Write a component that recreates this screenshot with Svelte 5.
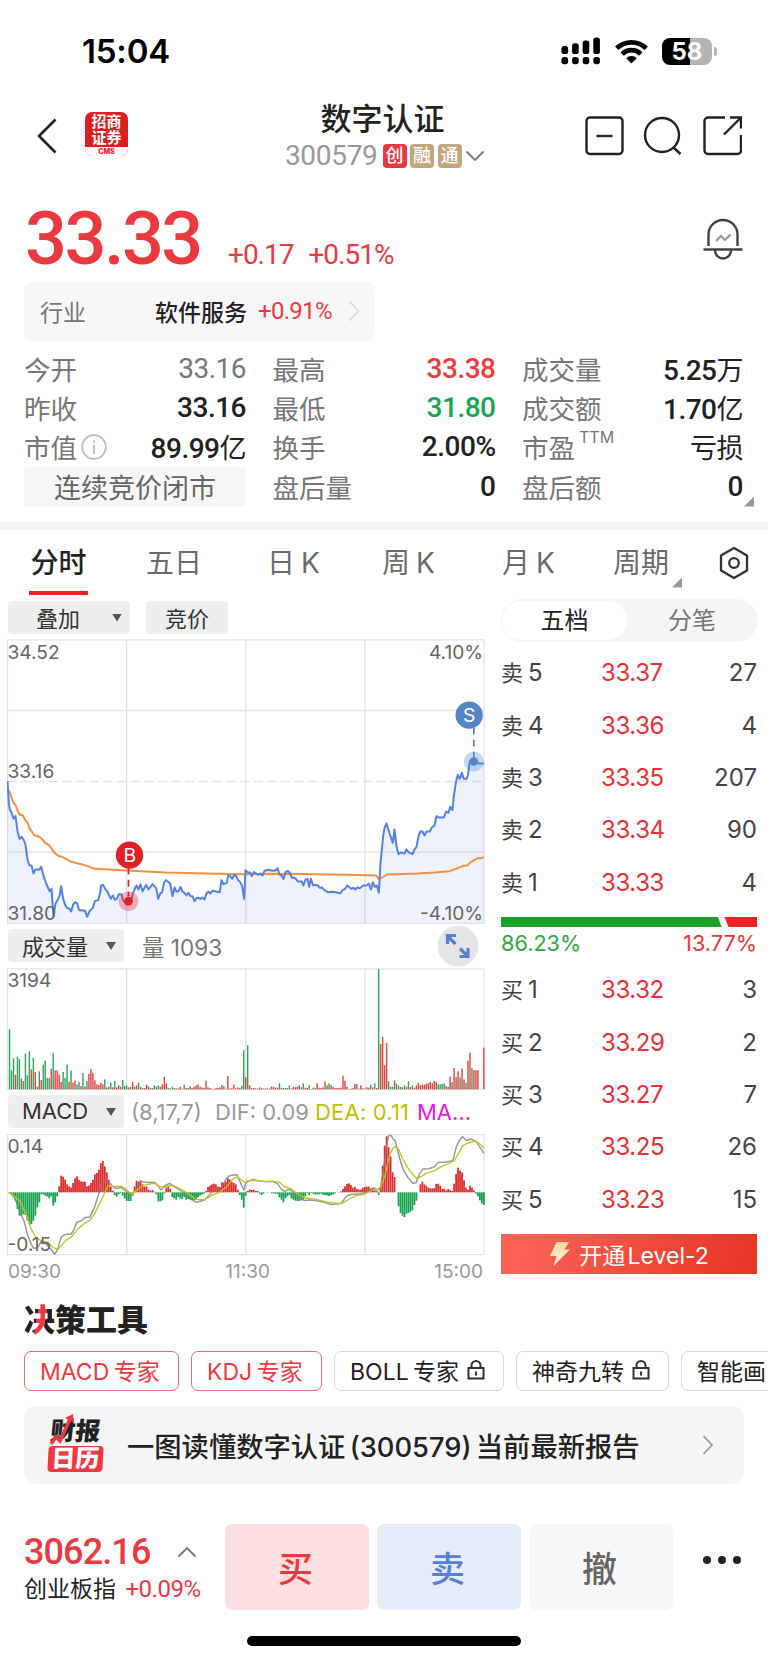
<script lang="ts">
    type Stat = { label: string; value: string; unit?: string; tone?: string; info?: boolean; sup?: string };

    const stats: Stat[] = [
        { label: '今开', value: '33.16', tone: 'muted' },
        { label: '最高', value: '33.38', tone: 'up' },
        { label: '成交量', value: '5.25', unit: '万' },
        { label: '昨收', value: '33.16' },
        { label: '最低', value: '31.80', tone: 'down' },
        { label: '成交额', value: '1.70', unit: '亿' },
        { label: '市值', value: '89.99', unit: '亿', info: true },
        { label: '换手', value: '2.00%' },
        { label: '市盈', value: '', unit: '亏损', sup: 'TTM' },
        { label: '连续竞价闭市', value: '' },
        { label: '盘后量', value: '0' },
        { label: '盘后额', value: '0' }
    ];

    const sells = [
        ['卖', '5', '33.37', '27'],
        ['卖', '4', '33.36', '4'],
        ['卖', '3', '33.35', '207'],
        ['卖', '2', '33.34', '90'],
        ['卖', '1', '33.33', '4']
    ];
    const buys = [
        ['买', '1', '33.32', '3'],
        ['买', '2', '33.29', '2'],
        ['买', '3', '33.27', '7'],
        ['买', '4', '33.25', '26'],
        ['买', '5', '33.23', '15']
    ];

    const tools = [
        { name: 'MACD 专家', active: true, width: 155 },
        { name: 'KDJ 专家', active: true, width: 131 },
        { name: 'BOLL 专家', lock: true, width: 170 },
        { name: '神奇九转', lock: true, width: 153 },
        { name: '智能画', width: 140 }
    ];

    // chart units are thirds of a pixel
    const price =
        '24,455 28,520 31,540 36,548 42,568 48,560 54,605 60,628 66,622 72,630 78,645 84,690 90,708 96,708 102,732 108,720 120,720 125,712 131,735 140,762 150,785 156,778 162,860 168,822 174,812 180,800 185,770 191,808 197,826 203,836 209,836 215,846 221,825 227,818 233,822 239,842 245,842 257,844 263,862 270,845 280,835 286,815 296,812 302,790 305,768 311,766 317,778 323,785 334,808 340,798 346,811 352,808 358,794 366,794 371,812 380,824 393,824 399,795 405,780 411,768 417,780 423,764 429,786 440,766 447,780 459,764 470,776 476,808 482,792 488,788 494,758 500,752 512,762 519,800 525,774 531,786 537,785 543,772 549,786 555,790 561,798 567,790 573,800 579,800 585,815 591,806 597,805 603,808 609,804 615,810 621,792 627,786 633,792 639,784 661,788 666,752 672,764 682,760 686,737 692,740 698,748 704,736 710,740 716,752 722,758 728,770 734,808 738,722 745,730 751,728 757,740 763,728 769,732 777,736 783,732 789,738 795,724 807,721 819,724 829,722 834,716 840,735 846,738 852,748 858,728 865,724 871,730 877,745 883,744 889,748 895,756 907,756 912,768 918,750 924,748 929,772 934,748 941,768 947,766 955,768 961,775 967,774 975,782 985,788 1000,787 1023,791 1029,782 1037,778 1043,768 1055,778 1061,774 1067,780 1073,774 1081,776 1091,768 1101,768 1108,762 1114,780 1120,758 1126,772 1132,768 1138,790 1143,700 1147,660 1151,620 1155,596 1161,582 1167,602 1173,620 1180,640 1185,600 1191,650 1197,674 1203,669 1215,672 1221,660 1227,668 1239,674 1245,660 1251,652 1257,620 1263,605 1269,606 1275,618 1281,606 1291,606 1297,594 1305,588 1311,560 1317,564 1333,564 1340,546 1347,550 1352,532 1359,542 1363,500 1369,460 1375,436 1381,448 1387,430 1393,448 1401,448 1405,438 1411,395 1417,390 1425,396 1440,402 1453,402';
    const average =
        '24,480 30,487 36,505 42,520 48,527 54,542 60,555 70,558 76,570 84,580 90,596 104,617 115,620 125,626 137,640 150,648 165,670 178,680 187,681 215,697 245,704 265,710 285,718 380,723 500,729 620,732 735,734 865,733 1035,736 1130,738 1137,748 1150,743 1163,735 1255,732 1305,729 1350,725 1375,716 1390,709 1403,708 1415,697 1435,686 1447,686 1453,683';

    // one bar per minute, negative = falling minute
    const volume = [
        -180, -57, -93, 44, -98, -90, 32, -25, -107, -42, -114, 60, -94, 52, 8, -54, 28, -74, -86, -34, -34, 62, -109, 57, 57, 44, 22, -52, -34, -74,
        23, -57, 20, 26, -14, -22, 10, -49, 8, -25, 46, 61, 50, 27, 15, 13, 20, 15, -30, 6, -8, -20, 6, -25, 6, 12, 8, -28, -10, -12,
        6, -8, 22, 8, 12, -20, -8, 4, 4, 14, -10, 4, 4, -12, -8, -12, 8, 15, 37, 18, -4, -3, -8, 4, 3, 3, 8, 2, -14, 4,
        4, -10, 4, 8, 12, 15, -8, 6, 4, 26, 6, 4, -2, 1, 4, 4, 6, 13, -10, 2, 40, 3, 3, 14, 3, 6, 4, -10, -117, 36,
        -132, 12, 3, 4, 3, 2, -6, 4, 2, 3, 3, 2, 8, 7, 5, 5, -18, -5, -4, 4, -4, -12, 2, 7, 6, 7, 13, -6, -18, 5,
        4, -12, 1, -5, 4, 18, 5, 4, 6, 24, -12, -18, 12, 7, 4, 4, 4, 5, 41, 26, 8, 1, -2, 4, 16, -16, 2, 12, 3, 2,
        6, 5, -14, 6, -18, 4, -361, 136, 157, 72, 139, -24, -8, -8, 26, -17, -12, 7, -6, -12, 8, -24, 7, -12, 5, 12, 19, 12, 14, 14,
        17, 18, 22, 18, 25, 22, -15, -15, -16, -18, 10, 7, 38, -22, 64, 36, 54, -36, 63, 30, -20, 86, 110, -64, 58, 57, 57, 0, 0, 125
    ];

    const macd = [
        -2, -5, -15, -25, -50, -70, -70, -66, -68, -85, -97, -95, -85, -70, -45, -30, -6, -6, -10, -12, -18, -12, -40, -30, -12, 18, 50, 47, 38, 24,
        18, 14, 28, 42, 48, 37, 33, 31, 32, 18, 20, 28, 38, 54, 58, 68, 88, 94, 78, 60, 38, 16, 5, -8, -13, -6, -2, -9, -18, -26,
        -26, -26, -10, 18, 35, 32, 36, 24, 17, 18, 8, 5, 7, 2, -6, -27, -27, -24, -3, 14, 18, 10, -14, -18, -22, -14, -18, -20, -14, -22,
        -20, -22, -24, -24, -22, -15, -10, -6, -4, 4, 16, 20, 24, 26, 24, 17, 16, 30, 28, 32, 42, 38, 32, 28, 24, 8, -8, -22, -46, -10,
        4, 8, 7, 8, 4, 4, -4, -8, -4, 0, 1, 0, -3, -3, -4, -5, -15, -22, -30, -18, -12, -8, -18, -22, -25, -26, -26, -24, -22, -12,
        -2, -8, -2, -4, -7, -6, -6, -4, -7, -8, -9, -11, -8, -6, -3, 0, 1, 3, 10, 18, 25, 27, 22, 14, 16, 10, 8, 8, 14, 16,
        17, 17, 11, 14, 8, 4, -8, 20, 80, 140, 168, 135, 108, 60, 46, 0, -42, -62, -70, -74, -64, -62, -58, -54, -38, -25, 0, 24, 32, 24,
        20, 14, 12, 12, 12, 25, 26, 20, 10, 10, 6, 10, 6, 4, 26, 55, 74, 65, 60, 36, 14, 8, 20, 14, 6, -4, -12, -24, -34, -38
    ];

    const dif =
        '30,815 45,830 60,870 75,905 85,945 95,970 103,983 115,980 125,962 140,970 158,990 165,1000 172,992 185,950 195,942 215,940 222,930 232,905 245,900 258,890 270,890 285,860 297,822 305,785 315,778 325,780 340,798 350,804 365,800 380,812 390,820 398,822 410,805 425,782 440,785 465,785 475,795 485,808 497,795 510,788 525,798 540,808 560,820 575,835 590,845 615,838 630,822 645,805 665,800 680,775 690,765 712,762 722,785 733,808 738,790 745,782 760,776 775,780 795,783 820,782 835,790 845,805 855,812 870,806 885,818 900,832 915,840 930,838 950,840 975,845 995,852 1025,848 1040,828 1050,822 1085,820 1105,812 1125,802 1135,808 1143,800 1153,740 1160,680 1167,645 1175,644 1181,655 1187,660 1197,700 1210,745 1225,770 1240,788 1250,786 1260,760 1270,745 1290,744 1305,738 1315,725 1335,725 1360,720 1370,680 1380,658 1390,648 1400,660 1415,655 1430,662 1445,685 1453,698';
    const dea =
        '30,815 60,840 80,880 95,925 110,952 125,960 145,965 160,980 175,986 185,975 200,958 215,950 235,925 255,908 270,900 285,880 300,850 315,818 325,795 345,797 365,797 380,806 395,820 410,810 430,794 465,787 480,797 495,799 520,794 545,805 570,822 590,836 615,838 640,822 660,815 680,800 700,775 715,768 725,778 738,785 750,780 775,780 795,782 820,782 840,785 855,798 875,805 895,820 915,832 950,836 985,845 1025,849 1050,835 1070,825 1095,820 1120,808 1140,806 1155,770 1170,705 1180,682 1187,678 1197,685 1210,715 1230,750 1250,772 1260,770 1280,758 1305,750 1325,738 1345,730 1365,720 1380,692 1390,675 1405,667 1425,661 1440,668 1453,682';

    const step = 1423 / 239;
    const columns = [24, 381.5, 739, 1096.5, 1453.5];
</script>

<div class="screen">
    <div class="status">
        <span class="clock">15:04</span>
        <div class="status-icons">
            <svg width="40" height="28" viewBox="0 0 40 28">
                {#each [0, 1, 2, 3] as i}
                    <rect x={0.5 + i * 10.6} y={9 - i * 2.8} width="6.6" height={8 + i * 2.8} rx="2.6" />
                    <rect x={0.5 + i * 10.6} y="20" width="6.6" height="7.2" rx="2.6" />
                {/each}
            </svg>
            <svg class="wifi" width="33" height="25" viewBox="0 0 33 25">
                <g fill="none" stroke="#000" stroke-width="4.8">
                    <path d="M1.8 9.3a21 21 0 0 1 29.4 0" />
                    <path d="M7.2 15a13.3 13.3 0 0 1 18.6 0" />
                </g>
                <path d="M16.5 24.6l-5.3-5.4a7.6 7.6 0 0 1 10.6 0z" />
            </svg>
            <div class="battery"><span>58</span></div>
            <i class="battery-tip"></i>
        </div>
    </div>

    <header>
        <svg class="back" width="22" height="36" viewBox="0 0 22 36">
            <path d="M19.500 1.500L3 18l16.500 16.500" fill="none" stroke="#222" stroke-width="2.6" />
        </svg>
        <div class="logo">
            <div class="logo-name">招商<br />证券</div>
            <div class="logo-sub">CMS</div>
        </div>
        <div class="title">
            <h1>数字认证</h1>
            <div class="code">
                <span class="num">300579</span>
                <b class="tag hot">创</b><b class="tag">融</b><b class="tag">通</b>
                <svg width="20" height="12" viewBox="0 0 20 12">
                    <path d="M1.500 1.500l8.500 8.500 8.500-8.500" fill="none" stroke="#777" stroke-width="1.8" />
                </svg>
            </div>
        </div>
        <svg class="actions" width="157" height="40" viewBox="0 0 157 40" fill="none" stroke="#222" stroke-width="2.4">
            <rect x="1.500" y="1.500" width="36" height="36.500" rx="3.500" />
            <path d="M11.500 20h16" />
            <circle cx="77" cy="19" r="17" />
            <path d="M88.500 31.500l7 6.500" />
            <path d="M140 1.500h-17a3.500 3.500 0 0 0-3.500 3.500v29.500a3.500 3.500 0 0 0 3.500 3.500h29.500a3.500 3.500 0 0 0 3.500-3.500V19M145 1.500h11v11M156 1.500L139 18.500" />
        </svg>
    </header>

    <section class="quote">
        <span class="last num">33.33</span>
        <span class="diff num">+0.17</span>
        <span class="diff num">+0.51%</span>
        <svg class="bell" width="40" height="42" viewBox="0 0 40 42" fill="none" stroke="#444" stroke-width="2.4">
            <path d="M5.500 28V16.500a14.500 14.500 0 0 1 29 0V28M0.500 31.500h39M12 32.500a8 8 0 0 0 16 0" />
            <path d="M13 23l5-5 4 4 5.500-5.500" stroke="#999" stroke-width="2.2" />
        </svg>
    </section>

    <section class="industry">
        <span class="industry-label">行业</span>
        <span class="industry-name">软件服务</span>
        <span class="industry-diff num">+0.91%</span>
        <svg width="12" height="22" viewBox="0 0 12 22">
            <path d="M1.500 1.500l9 9.500-9 9.500" fill="none" stroke="#ddd" stroke-width="2" />
        </svg>
    </section>

    <section class="stats">
        {#each stats as s}
            {#if s.value || s.unit}
                <div class="stat">
                    <span class="stat-label">
                        {s.label}{#if s.sup}<small>{s.sup}</small>{/if}
                        {#if s.info}
                            <svg width="26" height="26" viewBox="0 0 26 26" fill="none" stroke="#bbb" stroke-width="1.8">
                                <circle cx="13" cy="13" r="11.800" />
                                <path d="M13 11v9M13 6.500v2.200" />
                            </svg>
                        {/if}
                    </span>
                    <span class="stat-value num {s.tone ?? ''}">{s.value}{#if s.unit}<em>{s.unit}</em>{/if}</span>
                </div>
            {:else}
                <div class="stat phase">{s.label}</div>
            {/if}
        {/each}
        <i class="corner"></i>
    </section>

    <div class="divider"></div>

    <nav class="tabs">
        <span class="tab active">分时</span>
        <span class="tab">五日</span>
        <span class="tab">日 K</span>
        <span class="tab">周 K</span>
        <span class="tab">月 K</span>
        <span class="tab period">周期<i class="corner"></i></span>
        <svg width="30" height="34" viewBox="0 0 30 34" fill="none" stroke="#333" stroke-width="2.300">
            <path d="M15 2l13 7.500v15L15 32 2 24.500v-15z" stroke-linejoin="round" />
            <circle cx="15" cy="17" r="4.800" />
        </svg>
    </nav>

    <main>
        <div class="charts">
            <div class="bar overlay-bar">
                <button class="pill overlay">叠加<i class="down-arrow"></i></button>
                <button class="pill auction">竞价</button>
            </div>

            <svg class="plot" width="478" height="285" viewBox="22.500 28.500 1434 855">
                <g class="grid">
                    {#each columns as x}<path d="M{x} 31V882" />{/each}
                    {#each [31, 243, 668, 881.5] as y}<path d="M24 {y}H1454" />{/each}
                    <path d="M24 456H1454" stroke-dasharray="28 13" />
                </g>
                <polygon points="24,880 {price} 1453,880" fill="#5082e6" fill-opacity="0.1" />
                <polyline points={average} class="line" stroke="#f5913e" />
                <polyline points={price} class="line" stroke="#5580e4" />
                <g font-size="57.500" class="axis">
                    <text x="24" y="87">34.52</text>
                    <text x="24" y="445">33.16</text>
                    <text x="24" y="870">31.80</text>
                    <text x="1451" y="87" text-anchor="end">4.10%</text>
                    <text x="1451" y="870" text-anchor="end">-4.10%</text>
                </g>
                <path d="M387 715V800" stroke="#e32028" stroke-width="5" stroke-dasharray="20 16" />
                <circle cx="387" cy="815" r="30" fill="#e32028" fill-opacity="0.32" />
                <circle cx="387" cy="815" r="13" fill="#e32028" />
                <circle cx="390" cy="677" r="41" fill="#e32028" />
                <text x="391" y="698" class="mark">B</text>
                <path d="M1423 295V385" stroke="#4f7fbf" stroke-width="5" stroke-dasharray="20 16" />
                <circle cx="1423" cy="396" r="30" fill="#5486c4" fill-opacity="0.32" />
                <circle cx="1423" cy="396" r="13" fill="#5486c4" />
                <circle cx="1409" cy="257" r="41" fill="#5486c4" />
                <text x="1409" y="278" class="mark">S</text>
            </svg>

            <div class="bar volume-bar">
                <button class="pill indicator">成交量<i class="down-arrow"></i></button>
                <span class="volume-now">量 1093</span>
                <svg class="expand" width="42" height="42" viewBox="0 0 42 42">
                    <circle cx="21" cy="21" r="20.500" fill="#e5e5e7" />
                    <g stroke="#5580d8" stroke-width="3.200" fill="none">
                        <path d="M18.500 19L11 11.500M10.500 19v-8.500H19M23 23.500l7.500 7.500M31 23v8.500h-8.500" />
                    </g>
                </svg>
            </div>

            <svg class="plot" width="478" height="122" viewBox="22.500 143 1434 366">
                <g class="grid">
                    {#each columns as x}<path d="M{x} 145V507" />{/each}
                    <path d="M24 145.500H1454M24 507H1454" />
                </g>
                {#each volume as v, i}
                    <rect x={28 + i * step} y={507 - Math.abs(v)} width="4.200" height={Math.abs(v)} fill={v < 0 ? '#2fa35c' : '#e0423f'} />
                {/each}
                <text x="24" y="201" font-size="57.500" class="axis">3194</text>
            </svg>

            <div class="bar macd-bar">
                <button class="pill indicator">MACD<i class="down-arrow"></i></button>
                <span class="macd-args">(8,17,7)</span>
                <span class="macd-dif">DIF: 0.09</span>
                <span class="macd-dea">DEA: 0.11</span>
                <span class="macd-more">MA...</span>
            </div>

            <svg class="plot" width="478" height="122" viewBox="22.500 640 1434 366">
                <g class="grid">
                    {#each columns as x}<path d="M{x} 642V1003" />{/each}
                    <path d="M24 642H1454M24 1002H1454" />
                </g>
                <polyline points={dif} class="line thin" stroke="#96989c" />
                {#each macd as v, i}
                    <rect x={27.500 + i * step} y={v > 0 ? 815 - v : 815} width="5.300" height={Math.abs(v)} fill={v < 0 ? '#149f4c' : '#dc2d2d'} />
                {/each}
                <polyline points={dif} class="line thin" stroke="#96989c" stroke-opacity="0.450" />
                <polyline points={dea} class="line thin" stroke="#c2c41c" />
                <g font-size="57.500" class="axis">
                    <text x="24" y="698">0.14</text>
                    <text x="24" y="991">-0.15</text>
                </g>
            </svg>

            <div class="times"><span>09:30</span><span>11:30</span><span>15:00</span></div>
        </div>

        <aside>
            <div class="switch">
                <span class="on">五档</span>
                <span>分笔</span>
            </div>
            <div class="book sells">
                {#each sells as [side, level, p, qty]}
                    <div class="level"><span class="side">{side}</span><span>{level}</span><b>{p}</b><span class="qty">{qty}</span></div>
                {/each}
            </div>
            <svg class="ratio" width="256" height="10" viewBox="0 0 256 10">
                <path d="M0 0h217l3.500 10H0z" fill="#1aa024" />
                <path d="M223.500 0H256v10h-28.500z" fill="#ec2424" />
            </svg>
            <div class="ratio-text"><span class="green">86.23%</span><span class="red">13.77%</span></div>
            <div class="book buys">
                {#each buys as [side, level, p, qty]}
                    <div class="level"><span class="side">{side}</span><span>{level}</span><b>{p}</b><span class="qty">{qty}</span></div>
                {/each}
            </div>
            <button class="level2">
                <svg width="22" height="26" viewBox="0 0 22 26">
                    <defs>
                        <linearGradient id="bolt" x1="0" y1="0" x2="0" y2="1">
                            <stop offset="0" stop-color="#ffd9a0" />
                            <stop offset="1" stop-color="#fff8ea" />
                        </linearGradient>
                    </defs>
                    <path d="M7.500 1H20l-4.500 7.500H21L4.500 25l3-10H1z" fill="url(#bolt)" />
                </svg>
                <span>开通 Level-2</span>
            </button>
        </aside>
    </main>

    <section class="tools">
        <h2><span>决</span>策工具</h2>
        <div class="chips">
            {#each tools as t}
                <div class="chip" class:active={t.active} style="width: {t.width}px">
                    {t.name}
                    {#if t.lock}
                        <svg width="18" height="20" viewBox="0 0 18 20" fill="none" stroke="#333" stroke-width="2">
                            <path d="M1.500 8h15v10.500h-15zM4.500 8V5.500a4.500 4.500 0 0 1 9 0V8M9 11.500v4" />
                        </svg>
                    {/if}
                </div>
            {/each}
        </div>
    </section>

    <section class="report">
        <div class="report-logo">
            <div class="report-top">财报</div>
            <div class="report-bottom">日历</div>
            <svg width="28" height="34" viewBox="0 0 28 34">
                <path d="M3 31l5-7 4 4L22 6" fill="none" stroke="#ec3a42" stroke-width="3.500" />
                <path d="M17 5l8-4 1 9z" fill="#ec3a42" />
            </svg>
        </div>
        <span class="report-text">一图读懂数字认证 (300579) 当前最新报告</span>
        <svg width="12" height="20" viewBox="0 0 12 20">
            <path d="M1.500 1l8.500 9-8.500 9" fill="none" stroke="#999" stroke-width="1.800" />
        </svg>
    </section>

    <footer>
        <div class="index">
            <div class="index-value num">
                3062.16
                <svg width="20" height="12" viewBox="0 0 20 12">
                    <path d="M1.500 10.500L10 2l8.500 8.500" fill="none" stroke="#777" stroke-width="1.900" />
                </svg>
            </div>
            <div class="index-name">创业板指 <span class="num">+0.09%</span></div>
        </div>
        <button class="trade buy">买</button>
        <button class="trade sell">卖</button>
        <button class="trade cancel">撤</button>
        <div class="more"><i></i><i></i><i></i></div>
    </footer>
    <div class="home"></div>
</div>

<style>
    :global(body) {
        background: #fff;
    }

    .screen {
        width: 768px;
        height: 1663px;
        overflow: hidden;
        background: #fff;
        color: #222;
        font-family: Inter, 'Noto Sans CJK SC', sans-serif;
        display: flex;
        flex-direction: column;
    }

    .screen :global(*) {
        box-sizing: border-box;
    }

    .num {
        font-family: Roboto, 'Noto Sans CJK SC', sans-serif;
    }

    svg {
        display: block;
        flex: none;
    }

    button {
        border: none;
        padding: 0;
        font-family: inherit;
    }

    .status {
        height: 96px;
        flex: none;
        display: flex;
        justify-content: space-between;
        padding: 36px 51px 0 82px;
    }

    .clock {
        font-size: 33px;
        line-height: 31px;
        font-weight: 600;
        letter-spacing: -0.2px;
        color: #000;
    }

    .status-icons {
        display: flex;
        height: 28px;
        align-items: center;
        margin-top: 1px;
    }

    .wifi {
        margin: 0 14px 0 14px;
    }

    .battery {
        width: 50px;
        height: 27px;
        border-radius: 8px;
        background: linear-gradient(90deg, #000 57%, #b3b3b3 57%);
        color: #fff;
        font-size: 24px;
        line-height: 27px;
        font-weight: 700;
        text-align: center;
    }

    .battery-tip {
        width: 3px;
        height: 9px;
        margin-left: 2px;
        border-radius: 0 3px 3px 0;
        background: #b3b3b3;
    }

    header {
        height: 90px;
        flex: none;
        display: flex;
        align-items: flex-start;
        padding: 0 26px 0 36px;
    }

    .back {
        margin-top: 22px;
    }

    .logo {
        width: 43px;
        height: 44px;
        margin: 16px 0 0 27px;
        border-radius: 7px;
        overflow: hidden;
        background: #dc1f22;
        color: #fff;
        text-align: center;
    }

    .logo-name {
        height: 35px;
        padding-top: 2px;
        font-size: 15px;
        line-height: 16px;
        font-weight: 700;
    }

    .logo-sub {
        height: 9px;
        background: #fafafa;
        color: #dc1f22;
        font-size: 7px;
        line-height: 9px;
        font-weight: 800;
    }

    .title {
        width: 210px;
        margin-left: 152px;
        display: flex;
        flex-direction: column;
        align-items: center;
    }

    h1 {
        margin: 3px 0 0 6px;
        width: 135px;
        padding-right: 10px;
        font-size: 31px;
        line-height: 40px;
        font-weight: 500;
    }

    .code {
        display: flex;
        align-items: center;
        height: 28px;
        margin-top: 3px;
    }

    .code .num {
        font-size: 28px;
        line-height: 28px;
        color: #999;
        letter-spacing: -0.3px;
        margin-right: 5px;
    }

    .tag {
        width: 24px;
        height: 24px;
        margin-right: 3.500px;
        border-radius: 4px;
        background: #bfa680;
        color: #fff;
        font-size: 18px;
        line-height: 23px;
        font-weight: 500;
        text-align: center;
    }

    .hot {
        background: #ec3840;
    }

    .actions {
        margin: 20px 0 0 auto;
    }

    .quote {
        height: 96px;
        flex: none;
        display: flex;
        align-items: baseline;
        padding: 0 25px 0 25px;
        color: #ea3a40;
    }

    .last {
        width: 203px;
        font-size: 74px;
        line-height: 105px;
        font-weight: 500;
        letter-spacing: -2.600px;
    }

    .diff {
        margin-right: 15px;
        font-size: 28px;
        letter-spacing: -1px;
    }

    .bell {
        margin: 32px 0 0 auto;
        align-self: flex-start;
    }

    .industry {
        width: 351px;
        height: 59px;
        flex: none;
        margin-left: 24px;
        padding: 0 15px 2px 16px;
        border-radius: 8px;
        background: #f7f7f7;
        display: flex;
        align-items: center;
        font-size: 23px;
    }

    .industry-label {
        width: 115px;
        color: #777;
    }

    .industry-name {
        font-weight: 500;
    }

    .industry-diff {
        margin: 1px auto 0 11px;
        color: #ea3a40;
        font-size: 24px;
        letter-spacing: -0.7px;
    }

    .stats {
        position: relative;
        flex: none;
        display: grid;
        grid-template-columns: 222px 223px 221px;
        grid-auto-rows: 39.4px;
        column-gap: 26.500px;
        margin: 8px 0 0 24px;
    }

    .stat {
        display: flex;
        align-items: center;
        justify-content: space-between;
        white-space: nowrap;
        padding-bottom: 1px;
    }

    .stat-label {
        display: flex;
        align-items: center;
        gap: 4px;
        font-size: 26.500px;
        color: #777;
    }

    .stat-label small {
        font-size: 16px;
        line-height: 17px;
        margin-top: -18px;
    }

    .stat-value {
        font-size: 28px;
        letter-spacing: -0.5px;
        font-weight: 500;
    }

    .stat-value em {
        font-style: normal;
        font-weight: 400;
        font-size: 27px;
    }

    .up {
        color: #f03a40;
    }

    .down {
        color: #14a854;
    }

    .muted {
        color: #777;
        font-weight: 400;
    }

    .phase {
        justify-content: center;
        border-radius: 4px;
        background: #f6f6f6;
        color: #666;
        font-size: 27px;
    }

    .corner {
        position: absolute;
        right: 14px;
        bottom: 0;
        width: 10px;
        height: 10px;
        background: #999;
        clip-path: polygon(100% 0, 100% 100%, 0 100%);
    }

    .divider {
        height: 8px;
        flex: none;
        margin-top: 15px;
        background: #f4f4f4;
    }

    .tabs {
        height: 64px;
        flex: none;
        display: grid;
        grid-template-columns: 115px 114px 118px 117px 111px 115px 30px;
        padding: 0 20px 0 29px;
        line-height: 66px;
        font-size: 28px;
        word-spacing: -2px;
        color: #6b6b6b;
        align-items: center;
    }

    .tab {
        position: relative;
    }

    .tab.active {
        width: 59px;
        height: 64px;
        color: #222;
        border-bottom: 4px solid #ee2424;
        line-height: 65px;
        text-align: center;
        font-weight: 500;
    }

    .tab:nth-child(2) {
        padding-left: 2px;
    }

    .tab:nth-child(3) {
        padding-left: 9px;
    }

    .tab:nth-child(4) {
        padding-left: 6px;
    }

    .tab:nth-child(5) {
        padding-left: 9px;
    }

    .tab:nth-child(6) {
        padding-left: 9px;
    }

    .period .corner {
        right: 37px;
        bottom: 8px;
        background: #9499a0;
    }

    main {
        display: flex;
        height: 696px;
        flex: none;
    }

    .charts {
        width: 501px;
        padding-left: 8px;
    }

    .bar {
        display: flex;
        align-items: center;
        font-size: 22px;
    }

    .pill {
        display: flex;
        align-items: center;
        height: 33px;
        padding-bottom: 1px;
        border-radius: 4px;
        background: #eee;
        color: #333;
        font-size: 22px;
    }

    .overlay-bar {
        height: 45px;
        padding-top: 2px;
        gap: 16px;
    }

    .overlay {
        width: 122px;
        padding-left: 28px;
    }

    .auction {
        width: 82px;
        justify-content: center;
    }

    .indicator {
        width: 116px;
        padding-left: 14px;
    }

    .down-arrow {
        width: 10px;
        height: 8px;
        margin: 2px 8px 0 auto;
        background: #555;
        clip-path: polygon(0 0, 100% 0, 50% 100%);
    }

    .plot {
        margin-left: -1px;
    }

    .grid path {
        fill: none;
        stroke: #e3e3e5;
        stroke-width: 4;
    }

    .line {
        fill: none;
        stroke-width: 6;
        stroke-linejoin: round;
    }

    .thin {
        stroke-width: 4;
    }

    .axis {
        fill: #666;
        font-family: Inter, sans-serif;
    }

    .mark {
        fill: #fff;
        font-size: 58px;
        text-anchor: middle;
    }

    .volume-bar {
        height: 44px;
    }

    .volume-now {
        margin-left: 18px;
        color: #777;
        font-size: 22.500px;
    }

    .expand {
        margin: 1px 22px 0 auto;
    }

    .macd-bar {
        height: 44px;
        white-space: nowrap;
    }

    .macd-args {
        width: 84px;
        margin-left: 7px;
        color: #999;
    }

    .macd-dif {
        width: 100px;
        color: #999;
    }

    .macd-dea {
        width: 102px;
        color: #bfc000;
        letter-spacing: 0.2px;
    }

    .macd-more {
        color: #e21be2;
    }

    .times {
        width: 475px;
        display: flex;
        justify-content: space-between;
        padding-top: 4px;
        font-size: 19px;
        line-height: 24px;
        color: #999;
    }

    aside {
        width: 257px;
        display: flex;
        flex-direction: column;
        padding-top: 5px;
    }

    .switch {
        height: 43px;
        flex: none;
        display: flex;
        padding: 2px 1px;
        border-radius: 22px;
        background: #f5f5f5;
        font-size: 24px;
        line-height: 40px;
        color: #777;
    }

    .switch span {
        flex: 1;
        text-align: center;
    }

    .switch .on {
        flex: none;
        width: 125px;
        border-radius: 20px;
        background: #fff;
        color: #222;
    }

    .book {
        display: grid;
        grid-auto-rows: 52.400px;
        flex: none;
    }

    .sells {
        margin-top: 5px;
    }

    .buys {
        margin-top: 5px;
    }

    .level {
        display: grid;
        grid-template-columns: 27px 60px 80px 1fr;
        align-items: center;
        padding: 0 1px 0 0;
        font-size: 24px;
        color: #444;
    }

    .side {
        padding-bottom: 3px;
        font-size: 22px;
    }

    .level b {
        color: #e93034;
        font-weight: 400;
        padding-left: 13px;
        letter-spacing: -0.4px;
    }

    .qty {
        text-align: right;
    }

    .ratio {
        margin-top: 8px;
    }

    .ratio-text {
        display: flex;
        justify-content: space-between;
        height: 32px;
        padding: 0 1px 0 0;
        font-size: 21.700px;
        line-height: 33px;
    }

    .green {
        color: #2fa83c;
    }

    .red {
        color: #ea3838;
    }

    .level2 {
        width: 256px;
        height: 40px;
        margin-top: 9px;
        display: flex;
        align-items: center;
        justify-content: center;
        gap: 8px;
        background: linear-gradient(100deg, #fa6659, #e93524);
        color: #fff;
        font-size: 23px;
        word-spacing: -4px;
    }

    .tools {
        height: 116px;
        flex: none;
        padding-left: 24px;
    }

    h2 {
        margin: 11px 0 12px;
        font-size: 31px;
        line-height: 38px;
        font-weight: 900;
    }

    h2 span {
        background: linear-gradient(100deg, #222 42%, #ec3a42 42% 66%, #222 66%);
        background-clip: text;
        color: transparent;
    }

    .chips {
        display: flex;
        gap: 12px;
        width: 744px;
        overflow: hidden;
    }

    .chip {
        flex: none;
        height: 40px;
        display: flex;
        align-items: center;
        gap: 8px;
        padding-left: 15px;
        padding-bottom: 1px;
        border: 1.500px solid #d8d8d8;
        border-radius: 7px;
        font-size: 23px;
        word-spacing: -2px;
        white-space: nowrap;
    }

    .chip.active {
        border-color: #ee6a70;
        color: #ec3a42;
    }

    .report {
        width: 720px;
        height: 78px;
        flex: none;
        margin-left: 24px;
        padding: 0 30px 0 24px;
        display: flex;
        align-items: center;
        border-radius: 12px;
        background: #f5f5f5;
    }

    .report-logo {
        position: relative;
        width: 55px;
        font-size: 25px;
        line-height: 27px;
        font-weight: 900;
        text-align: center;
    }

    .report-top {
        transform: skewX(-6deg);
        white-space: nowrap;
    }

    .report-bottom {
        transform: skewX(-3deg);
        border-radius: 4px;
        background: #ec3a42;
        color: #fff;
        font-size: 24px;
        line-height: 26px;
        margin-top: 1px;
    }

    .report-logo svg {
        position: absolute;
        left: 0;
        top: -5px;
    }

    .report-text {
        margin: 0 auto 0 24px;
        font-size: 27.300px;
        font-weight: 500;
        word-spacing: -3px;
    }

    footer {
        flex: none;
        height: 86px;
        margin-top: 40px;
        display: flex;
        gap: 8px;
        padding-left: 24px;
    }

    .index {
        width: 192.500px;
    }

    .index-value {
        display: flex;
        align-items: center;
        justify-content: space-between;
        height: 50px;
        padding-right: 20px;
        margin-top: 3px;
        font-size: 36px;
        font-weight: 500;
        letter-spacing: -0.900px;
        color: #ea3a40;
    }

    .index-name {
        font-size: 23px;
        line-height: 24px;
        white-space: nowrap;
    }

    .index-name .num {
        margin-left: 3px;
        color: #ea3a40;
        font-size: 24px;
        letter-spacing: -0.500px;
    }

    .trade {
        width: 144px;
        border-radius: 7px;
        font-size: 35px;
        font-weight: 500;
        padding-right: 2px;
    }

    .buy {
        background: #fce0e1;
        color: #ea3a40;
    }

    .sell {
        background: #e6ecf9;
        color: #5580d8;
    }

    .cancel {
        background: #f7f7f7;
        color: #666;
    }

    .more {
        display: flex;
        gap: 7px;
        margin: 32px 0 0 22px;
    }

    .more i {
        width: 8px;
        height: 8px;
        border-radius: 50%;
        background: #222;
    }

    .home {
        width: 274px;
        height: 10px;
        flex: none;
        margin: 26px 0 0 247px;
        border-radius: 5px;
        background: #000;
    }
</style>
